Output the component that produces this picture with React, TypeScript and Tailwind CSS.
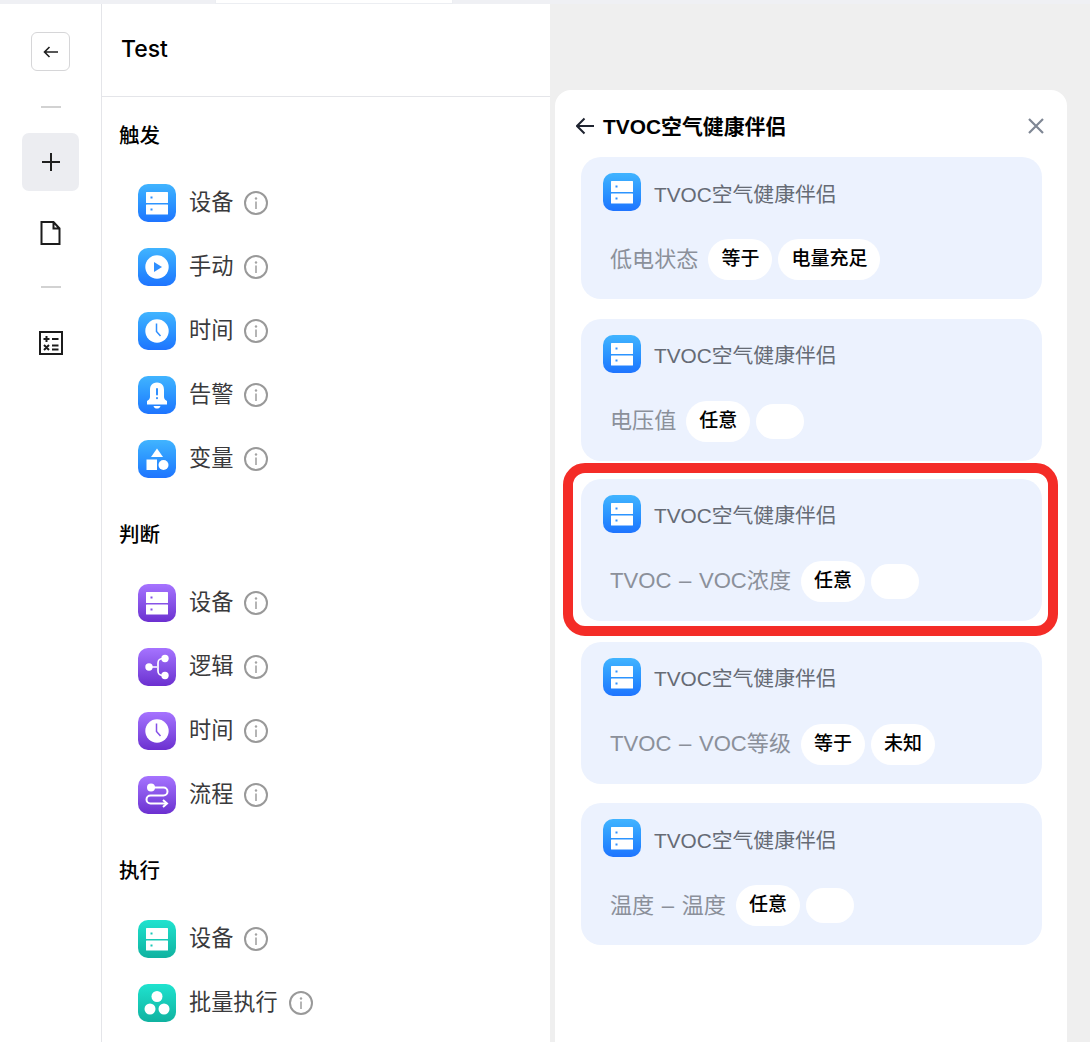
import type { ReactNode } from 'react';

type Tone = 'blue' | 'purple' | 'teal';

const TONE_BG: Record<Tone, string> = {
  blue: 'bg-linear-to-b from-[#41b4ff] to-[#1f74ff]',
  purple: 'bg-linear-to-b from-[#a673ff] to-[#6c2fd0]',
  teal: 'bg-linear-to-b from-[#1fe3cf] to-[#10b2a0]',
};

const TONE_INK: Record<Tone, string> = {
  blue: '#2f8fff',
  purple: '#8450e8',
  teal: '#18c9b8',
};

type Glyph = 'device' | 'play' | 'clock' | 'bell' | 'shapes' | 'logic' | 'flow' | 'batch';

function GlyphIcon({ glyph, tone }: { glyph: Glyph; tone: Tone }) {
  const ink = TONE_INK[tone];
  return (
    <div className={`w-[38px] h-[38px] rounded-[10px] shrink-0 ${TONE_BG[tone]}`}>
      <svg width="38" height="38" viewBox="0 0 38 38" fill="none">
        {glyph === 'device' && (
          <>
            <rect x="8" y="8" width="22" height="11" rx="0.5" fill="#fff" />
            <rect x="8" y="20.5" width="22" height="10" rx="0.5" fill="#fff" />
            <rect x="12.5" y="12.5" width="2" height="2" fill={ink} />
            <rect x="12.5" y="24.5" width="2" height="2" fill={ink} />
          </>
        )}
        {glyph === 'play' && (
          <>
            <circle cx="19" cy="19" r="11.7" fill="#fff" />
            <path d="M16 14 L24 19 L16 24 Z" fill={ink} />
          </>
        )}
        {glyph === 'clock' && (
          <>
            <circle cx="19" cy="19" r="11.7" fill="#fff" />
            <path d="M18.5 11.5 V19.5 L22.5 24" stroke={ink} strokeWidth="1.5" />
          </>
        )}
        {glyph === 'bell' && (
          <>
            <path
              d="M19 6.5 C13.5 6.5 12 10.5 12 14 V21 C12 23 10.5 24 9 25 V28.5 H29 V25 C27.5 24 26 23 26 21 V14 C26 10.5 24.5 6.5 19 6.5 Z"
              fill="#fff"
            />
            <path d="M15.5 30 H22.5 C22 32 20.5 32.5 19 32.5 C17.5 32.5 16 32 15.5 30 Z" fill="#fff" />
            <rect x="18" y="12" width="2" height="7.5" rx="1" fill={ink} />
            <rect x="18" y="21" width="2" height="2.2" rx="1" fill={ink} />
          </>
        )}
        {glyph === 'shapes' && (
          <>
            <path d="M19 8.5 L25 17 H13 Z" fill="#fff" />
            <rect x="8.5" y="19.5" width="10.5" height="10.5" fill="#fff" />
            <circle cx="25.5" cy="25" r="5" fill="#fff" />
          </>
        )}
        {glyph === 'logic' && (
          <>
            <path d="M11 19 H19 M26 10.5 C21 10.5 20 12 20 15 V23 C20 26 21 27.5 26 27.5" stroke="#fff" strokeWidth="1.7" />
            <circle cx="11" cy="19" r="3.7" fill="#fff" />
            <circle cx="27" cy="10.5" r="3.7" fill="#fff" />
            <circle cx="27" cy="27.5" r="3.7" fill="#fff" />
          </>
        )}
        {glyph === 'flow' && (
          <>
            <circle cx="13" cy="11.5" r="4" fill="#fff" />
            <path
              d="M15 11.5 H25.5 A3.8 3.8 0 0 1 25.5 19.5 H12.5 A3.8 3.8 0 0 0 12.5 27.5 H28"
              stroke="#fff"
              strokeWidth="2"
            />
            <path d="M25 24 L29 27.5 L25 31" stroke="#fff" strokeWidth="2" />
          </>
        )}
        {glyph === 'batch' && (
          <>
            <circle cx="19" cy="12.5" r="5.5" fill="#fff" />
            <circle cx="12" cy="25" r="5.5" fill="#fff" />
            <circle cx="26" cy="25" r="5.5" fill="#fff" />
          </>
        )}
      </svg>
    </div>
  );
}

function InfoIcon() {
  return (
    <svg width="24" height="24" viewBox="0 0 24 24" fill="none" className="shrink-0">
      <circle cx="12" cy="12" r="11" stroke="#999999" strokeWidth="2" />
      <circle cx="12" cy="7.5" r="1.2" fill="#a3a3a3" />
      <path d="M12 10.5 V18" stroke="#a3a3a3" strokeWidth="1.6" />
    </svg>
  );
}

function PaletteRow({ glyph, tone, label }: { glyph: Glyph; tone: Tone; label: string }) {
  return (
    <div className="h-[64px] pl-[36px] flex items-center">
      <GlyphIcon glyph={glyph} tone={tone} />
      <span className="ml-[13px] text-[22.2px] leading-[30px] text-[#3a3a3c]">{label}</span>
      <span className="ml-[11px]">
        <InfoIcon />
      </span>
    </div>
  );
}

function Section({ title, children, titleClass }: { title: string; children: ReactNode; titleClass: string }) {
  return (
    <div className="mb-[28px]">
      <div className={`h-[32px] pl-[17px] text-[20.5px] leading-[32px] font-medium text-black ${titleClass}`}>{title}</div>
      {children}
    </div>
  );
}

function Pill({ text }: { text: string }) {
  if (!text) return <div className="w-[48px] h-[35px] rounded-[18px] bg-white" />;
  return (
    <div className="h-[41px] px-[13px] rounded-[21px] bg-white flex items-center text-[19px] font-medium text-black">
      {text}
    </div>
  );
}

function ConditionCard({ label, pills, gap }: { label: string; pills: string[]; gap?: string }) {
  return (
    <div className={`w-[461px] h-[142px] rounded-[20px] bg-[#ecf2fe] pt-[16px] ${gap ?? ''}`}>
      <div className="pl-[22px] flex items-center">
        <GlyphIcon glyph="device" tone="blue" />
        <span className="ml-[13px] pt-[5px] text-[20.8px] text-[#666b75]">TVOC空气健康伴侣</span>
      </div>
      <div className="mt-[28px] pl-[29px] h-[41px] flex items-center">
        <span className="text-[22.1px] text-[#8b909a] mr-[10px] whitespace-pre [word-spacing:1.5px]">{label}</span>
        <div className="flex items-center gap-[6px]">
          {pills.map((pill, i) => (
            <Pill key={i} text={pill} />
          ))}
        </div>
      </div>
    </div>
  );
}

export default function App() {
  return (
    <div className="relative w-[1090px] h-[1042px] overflow-hidden bg-white font-['Liberation_Sans','Noto_Sans_CJK_SC',sans-serif]">
      {/* top tab strip */}
      <div className="flex h-[4px]">
        <div className="w-[215px] bg-[#eff0f4]" />
        <div className="w-[238px] border-x border-b border-[#eceef2] bg-white" />
        <div className="flex-1 bg-[#eff0f4]" />
      </div>

      <div className="flex h-[1038px]">
        {/* tool rail */}
        <div className="w-[102px] shrink-0 border-r border-[#e4e5e9] flex flex-col items-center">
          <button className="mt-[28px] w-[39px] h-[39px] rounded-[6px] border border-[#d6d6d8] flex items-center justify-center">
            <svg width="16" height="16" viewBox="0 0 16 16" fill="none" stroke="#1f1f1f" strokeWidth="1.6" className="ml-[1px]">
              <path d="M15 8 H1.5 M6.5 3 L1.5 8 L6.5 13" />
            </svg>
          </button>
          <div className="mt-[35px] w-[20px] h-[2px] bg-[#d2d2d2]" />
          <button className="mt-[25px] w-[57px] h-[58px] rounded-[7px] bg-[#ecedf1] flex items-center justify-center">
            <svg width="20" height="20" viewBox="0 0 20 20" fill="none" stroke="#202020" strokeWidth="2">
              <path d="M10 1 V19 M1 10 H19" />
            </svg>
          </button>
          <svg width="21" height="24" viewBox="0 0 21 24" fill="none" stroke="#1c1c1c" strokeWidth="2" className="mt-[30px]">
            <path d="M1.5 1 H13.5 L19.5 7.5 V23 H1.5 Z M13.5 1 V7.5 H19.5" />
          </svg>
          <div className="mt-[41px] w-[20px] h-[2px] bg-[#d2d2d2]" />
          <svg width="24" height="24" viewBox="0 0 24 24" fill="none" stroke="#1c1c1c" className="mt-[43px]">
            <rect x="1" y="1" width="22" height="22" strokeWidth="2" />
            <path d="M4.5 8 H10.5 M7.5 5 V11 M13 8 H19.5" strokeWidth="2" />
            <path d="M5 14 L10 19 M10 14 L5 19 M13 14.5 H19.5 M13 18.5 H19.5" strokeWidth="2" />
          </svg>
        </div>

        {/* palette */}
        <div className="w-[448px] shrink-0">
          <div className="h-[93px] border-b border-[#e4e5e9] pl-[19px] pt-[29px] text-[23px] leading-[32px] font-medium text-black font-['Inter','Noto_Sans_CJK_SC',sans-serif]">
            Test
          </div>
          <div className="pt-[22px]">
            <Section title="触发" titleClass="mt-[1px] mb-[19px]">
              <PaletteRow glyph="device" tone="blue" label="设备" />
              <PaletteRow glyph="play" tone="blue" label="手动" />
              <PaletteRow glyph="clock" tone="blue" label="时间" />
              <PaletteRow glyph="bell" tone="blue" label="告警" />
              <PaletteRow glyph="shapes" tone="blue" label="变量" />
            </Section>
            <Section title="判断" titleClass="mb-[20px]">
              <PaletteRow glyph="device" tone="purple" label="设备" />
              <PaletteRow glyph="logic" tone="purple" label="逻辑" />
              <PaletteRow glyph="clock" tone="purple" label="时间" />
              <PaletteRow glyph="flow" tone="purple" label="流程" />
            </Section>
            <Section title="执行" titleClass="mb-[20px]">
              <PaletteRow glyph="device" tone="teal" label="设备" />
              <PaletteRow glyph="batch" tone="teal" label="批量执行" />
            </Section>
          </div>
        </div>

        {/* canvas with detail panel */}
        <div className="flex-1 bg-[#efefef] pl-[5px] pt-[86px]">
          <div className="w-[512px] h-[952px] rounded-t-[16px] bg-white">
            <div className="h-[67px] pt-[5px] pl-[21px] pr-[23px] flex items-center">
              <svg width="19" height="18" viewBox="0 0 19 18" fill="none" stroke="#1f2430" strokeWidth="2">
                <path d="M18 9 H1 M8.5 1.5 L1 9 L8.5 16.5" />
              </svg>
              <span className="ml-[8px] pt-[1px] text-[20.9px] font-bold text-black">TVOC空气健康伴侣</span>
              <svg width="16" height="16" viewBox="0 0 16 16" fill="none" stroke="#7f8794" strokeWidth="2.2" className="ml-auto">
                <path d="M1 1 L15 15 M15 1 L1 15" />
              </svg>
            </div>
            <div className="pl-[26px]">
              <ConditionCard label="低电状态" pills={['等于', '电量充足']} />
              <ConditionCard label="电压值" pills={['任意', '']} gap="mt-[19.5px]" />
              <ConditionCard label="TVOC – VOC浓度" pills={['任意', '']} gap="mt-[18px]" />
              <ConditionCard label="TVOC – VOC等级" pills={['等于', '未知']} gap="mt-[21px]" />
              <ConditionCard label="温度 – 温度" pills={['任意', '']} gap="mt-[19.5px]" />
            </div>
          </div>
        </div>
      </div>

      {/* red annotation */}
      <div className="absolute left-[563px] top-[463px] w-[495px] h-[173px] rounded-[22px] border-[10px] border-[#f42c27]" />
    </div>
  );
}
